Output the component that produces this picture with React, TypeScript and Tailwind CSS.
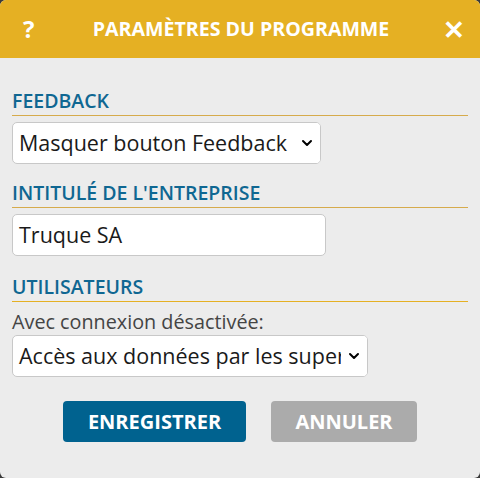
import { ChevronDown } from "lucide-react";

const font = { fontFamily: '"Open Sans", "Liberation Sans", sans-serif' };

const SectionTitle = ({ children, line }: { children: string; line: string }) => (
  <h2 className={`border-b pb-[1px] text-[19.5px] font-semibold leading-[26px] text-[#0f6792] ${line}`}>
    {children}
  </h2>
);

const FakeSelect = ({ value, width }: { value: string; width: string }) => (
  <div
    className={`relative flex h-[42px] items-center overflow-hidden rounded-[5px] border border-[#c8c8c8] bg-white pl-[6px] pr-[26px] ${width}`}
  >
    <span className="whitespace-nowrap text-[21.5px] text-[#1a1a1a]">{value}</span>
    <div className="absolute right-0 top-0 flex h-full w-[26px] items-center justify-center bg-white">
      <ChevronDown size={16} strokeWidth={3} className="text-black" />
    </div>
  </div>
);

export default function App() {
  return (
    <div className="h-[478px] w-[480px] bg-[#3a3a3a]" style={font}>
      <div className="flex h-full flex-col overflow-hidden rounded-[6px] bg-[#ececec]">
        <header className="flex h-[58px] items-center justify-between bg-[#e5b023] pl-[23px] pr-[21px] text-white">
          <span className="w-[16px] text-[24px] font-bold">?</span>
          <span className="text-[19.6px] font-bold">PARAMÈTRES DU PROGRAMME</span>
          <span className="w-[16px] text-[26px] font-bold leading-none">✕</span>
        </header>

        <div className="flex flex-col px-[12px] pt-[30px]">
          <SectionTitle line="border-[#d6ab4c]">FEEDBACK</SectionTitle>
          <div className="mt-[6px]">
            <FakeSelect value="Masquer bouton Feedback" width="w-[309px]" />
          </div>

          <div className="mt-[16px]">
            <SectionTitle line="border-[#d6ab4c]">INTITULÉ DE L'ENTREPRISE</SectionTitle>
          </div>
          <div className="mt-[6px] flex h-[42px] w-[314px] items-center rounded-[5px] border border-[#c8c8c8] bg-white pl-[6px] text-[21.5px] text-[#1a1a1a]">
            Truque SA
          </div>

          <div className="mt-[18px]">
            <SectionTitle line="border-[#e5b023]">UTILISATEURS</SectionTitle>
          </div>
          <p className="mt-[6px] text-[19.8px] leading-[27px] text-[#444]">Avec connexion désactivée:</p>
          <div>
            <FakeSelect value="Accès aux données par les superviseurs" width="w-[356px]" />
          </div>

          <div className="mt-[24px] flex justify-center gap-[25px]">
            <button className="h-[41px] w-[183px] rounded-[4px] bg-[#00628f] text-[20px] font-bold text-white">
              ENREGISTRER
            </button>
            <button className="h-[41px] w-[146px] rounded-[4px] bg-[#ababab] text-[20px] font-bold text-white">
              ANNULER
            </button>
          </div>
        </div>
      </div>
    </div>
  );
}
